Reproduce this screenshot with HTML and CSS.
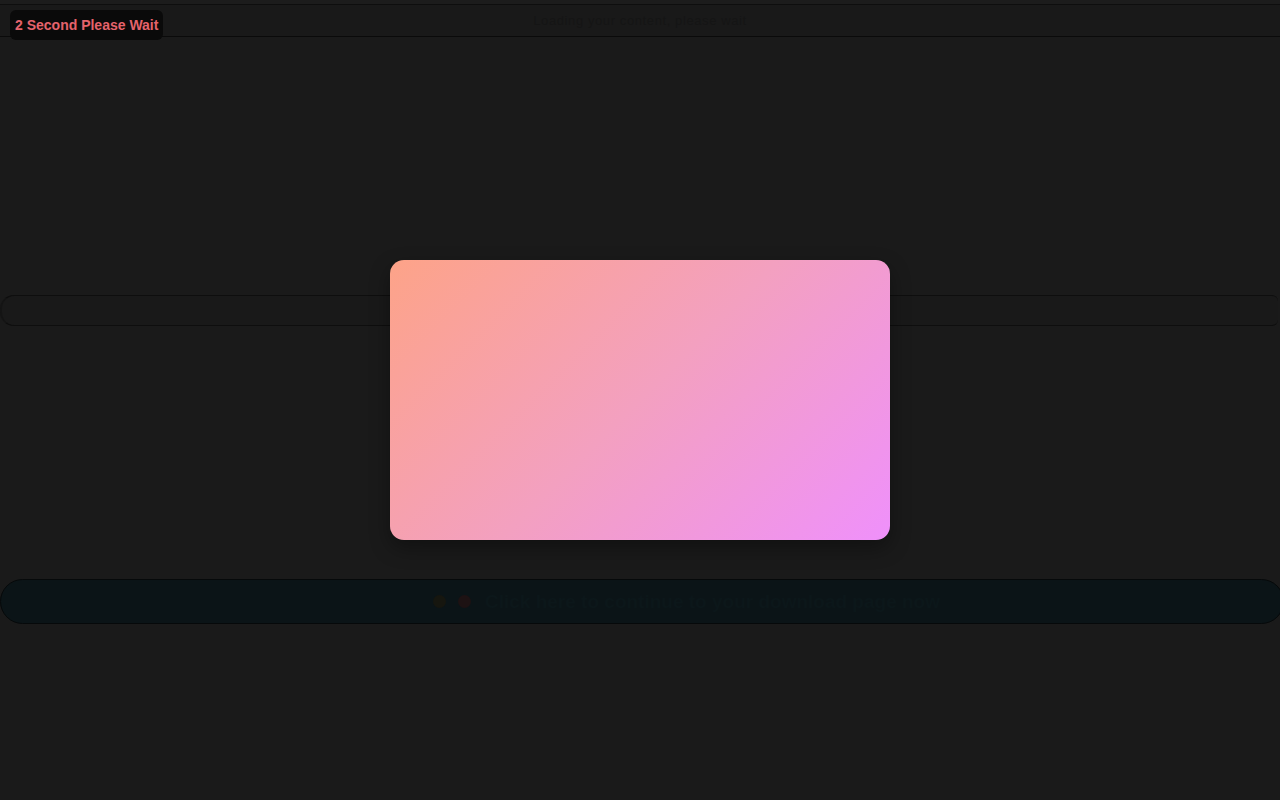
FILE: index.html
```html
<!DOCTYPE html>
<html lang="en">
<head>
<meta charset="utf-8">
<title>Please Wait</title>
<link rel="stylesheet" href="styles.css">
</head>
<body>
<div class="page">
  <div class="top-strip"></div>
  <header class="header">
    <span class="header-title">Loading your content, please wait</span>
  </header>
  <main class="main">
    <div class="search-bar"></div>
    <div class="action-pill">
      <span class="dot dot-orange"></span>
      <span class="dot dot-red"></span>
      <span class="pill-text">Click here to continue to your download page now</span>
    </div>
  </main>
</div>

<div class="badge">2 Second Please Wait</div>

<div class="modal-layer">
  <div class="modal-card"></div>
</div>
</body>
</html>
```

FILE: styles.css
```css
* { box-sizing: border-box; }

html, body {
  margin: 0;
  padding: 0;
  background: #1a1a1a;
  font-family: "Liberation Sans", Arial, sans-serif;
  width: 1280px;
  height: 800px;
  overflow: hidden;
}

.page {
  display: flex;
  flex-direction: column;
  height: 800px;
}

.top-strip {
  height: 4px;
  background: #1c1c1c;
}

.header {
  height: 33px;
  background: #191919;
  border-top: 1px solid #0e0e0e;
  border-bottom: 1px solid #0a0a0a;
  display: flex;
  align-items: center;
  justify-content: center;
}

.header-title {
  font-family: "Liberation Sans", Arial, sans-serif;
  font-size: 13px;
  color: #151515;
  letter-spacing: 0.6px;
}

.main {
  display: flex;
  flex-direction: column;
  padding-top: 258px;
}

.search-bar {
  height: 31px;
  margin: 0 2px 0 0;
  background: #191919;
  border-top: 1px solid #0e0e0e;
  border-bottom: 1px solid #0e0e0e;
  border-left: 2px solid #141414;
  border-radius: 14px 6px 6px 14px;
}

.action-pill {
  margin-top: 253px;
  height: 45px;
  margin-right: -4px;
  background: #0b1417;
  border: 1px solid #06090a;
  border-radius: 23px;
  display: flex;
  align-items: center;
  padding-left: 432px;
  gap: 12px;
}

.dot {
  width: 13px;
  height: 13px;
  border-radius: 50%;
}

.dot-orange { background: #16160f; }
.dot-red { background: #1d1213; }

.pill-text {
  font-family: "Liberation Sans", Arial, sans-serif;
  font-size: 19px;
  font-weight: bold;
  color: #0c171a;
  margin-left: 2px;
}

.badge {
  position: fixed;
  top: 10px;
  left: 10px;
  height: 30px;
  padding: 0 5px;
  display: flex;
  align-items: center;
  background: #0a0a0a;
  border-radius: 6px;
  color: #e5636c;
  font-size: 14px;
  font-weight: bold;
  font-family: "Liberation Sans", Arial, sans-serif;
  z-index: 20;
}

.modal-layer {
  position: fixed;
  inset: 0;
  display: flex;
  align-items: center;
  justify-content: center;
  z-index: 10;
}

.modal-card {
  width: 500px;
  height: 280px;
  border-radius: 14px;
  background: linear-gradient(135deg, #fda388 0%, #f3a0c0 50%, #ef90fb 100%);
  box-shadow: 0 8px 20px rgba(0, 0, 0, 0.35);
}
```
